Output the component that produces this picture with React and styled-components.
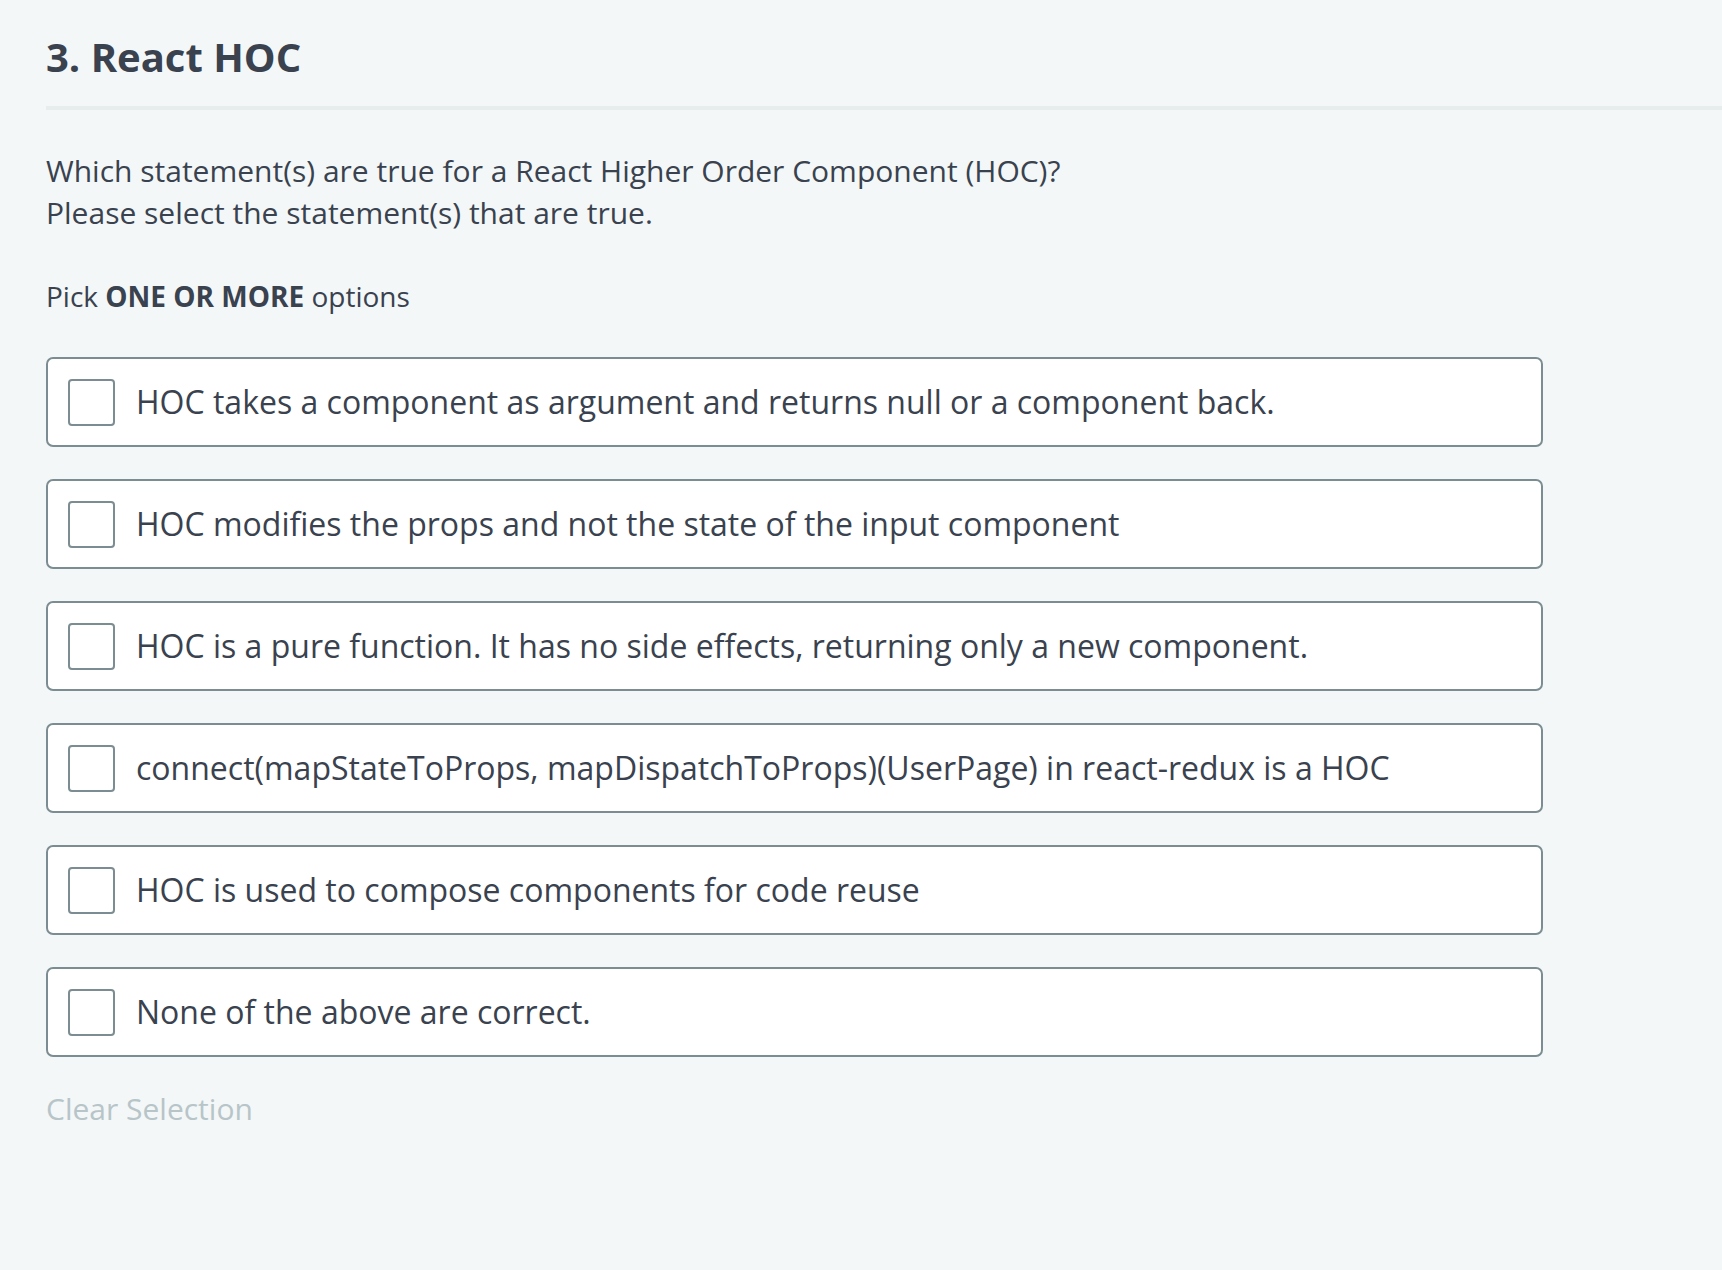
import React from "react";
import styled, { createGlobalStyle } from "styled-components";

const Global = createGlobalStyle`
  html, body { margin: 0; padding: 0; background: #f3f7f7; }
  body { font-family: "Open Sans", "Noto Sans", sans-serif; color: #39424e; }
  * { box-sizing: border-box; }
`;

const Page = styled.div`
  min-height: 1270px;
  padding-left: 46px;
  background: #f3f7f7;
`;

const Header = styled.header`
  padding-top: 33px;
  padding-bottom: 25px;
  border-bottom: 4px solid #e7eced;
`;

const Title = styled.h1`
  margin: 0;
  font-size: 40px;
  line-height: 48px;
  font-weight: 700;
  color: #39424e;
`;

const Body = styled.section`
  padding-top: 40px;
  width: 1497px;
`;

const Question = styled.p`
  margin: 0;
  font-size: 30px;
  line-height: 42px;
`;

const Hint = styled.p`
  margin: 41px 0 0;
  font-size: 28px;
  line-height: 42px;
  b { font-weight: 700; }
`;

const OptionList = styled.ul`
  list-style: none;
  margin: 40px 0 0;
  padding: 0;
  display: flex;
  flex-direction: column;
  gap: 32px;
`;

const Option = styled.li`
  height: 90px;
  display: flex;
  align-items: center;
  gap: 21px;
  padding: 0 20px;
  background: #ffffff;
  border: 2px solid #7b8d93;
  border-radius: 7px;
`;

const Box = styled.span`
  flex: 0 0 47px;
  width: 47px;
  height: 47px;
  border: 2px solid #7b8d93;
  border-radius: 4px;
  background: #fff;
`;

const Label = styled.span`
  font-size: 32px;
  line-height: 42px;
  color: #39424e;
`;

const Clear = styled.div`
  margin-top: 31px;
  font-size: 30px;
  line-height: 42px;
  color: #b7c5c9;
`;

const options = [
  "HOC takes a component as argument and returns null or a component back.",
  "HOC modifies the props and not the state of the input component",
  "HOC is a pure function. It has no side effects, returning only a new component.",
  "connect(mapStateToProps, mapDispatchToProps)(UserPage) in react-redux is a HOC",
  "HOC is used to compose components for code reuse",
  "None of the above are correct.",
];

export default function App() {
  return (
    <Page>
      <Global />
      <Header>
        <Title>3. React HOC</Title>
      </Header>
      <Body>
        <Question>
          Which statement(s) are true for a React Higher Order Component (HOC)?
          <br />
          Please select the statement(s) that are true.
        </Question>
        <Hint>
          Pick <b>ONE OR MORE</b> options
        </Hint>
        <OptionList>
          {options.map((o) => (
            <Option key={o}>
              <Box />
              <Label>{o}</Label>
            </Option>
          ))}
        </OptionList>
        <Clear>Clear Selection</Clear>
      </Body>
    </Page>
  );
}
